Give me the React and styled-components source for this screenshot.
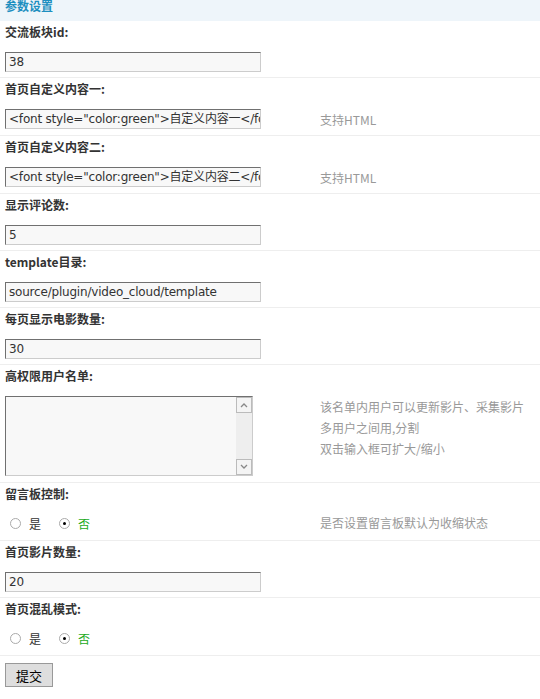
import React from "react";
import styled, { createGlobalStyle } from "styled-components";

const G = createGlobalStyle`
  body { margin:0; background:#fff; font-family: "DejaVu Sans","Noto Sans CJK SC",sans-serif; font-size:12px; color:#333; }
`;
const Page = styled.div`width:540px;`;
const Head = styled.div`
  height:21px; background:#eef5fa; color:#1e8fc0; font-weight:bold; font-size:12px;
  line-height:12px; padding-left:5px; font-family:"Noto Sans CJK SC",sans-serif; overflow:hidden;
`;
const Section = styled.div`border-bottom:1px solid #eeeeee;`;
const Label = styled.div`
  padding-left:5px; line-height:22px; height:22px; font-weight:bold; font-size:12px; color:#333;
  font-family:"Noto Sans CJK SC",sans-serif;
`;
const Field = styled.div`
  display:grid; grid-template-columns:315px 1fr; align-items:start;
  padding:${p => p.$radio ? "8px 0 7px 5px" : "9px 0 5px 5px"};
  ${p => p.$tall && "padding-bottom:6px;"}
`;
const Input = styled.div`
  box-sizing:border-box; width:256px; height:20px; background:#f8f8f8;
  border:1px solid #ccc; border-top-color:#707070; border-left-color:#707070;
  font-size:12px; line-height:18px; padding-left:3px; white-space:nowrap; overflow:hidden; color:#333;
  font-family:"DejaVu Sans","Noto Sans CJK SC",sans-serif; letter-spacing:-0.2px;
`;
const Area = styled.div`
  box-sizing:border-box; width:248px; height:80px; background:#f8f8f8;
  border:1px solid #ccc; border-top-color:#707070; border-left-color:#707070;
  display:flex; justify-content:flex-end;
`;
const Scroll = styled.div`
  width:16px; background:#eeeeee; display:flex; flex-direction:column; justify-content:space-between;
`;
const Arrow = styled.div`
  height:16px; box-sizing:border-box; border:1px solid #bbb; background:#f4f4f4;
  display:flex; align-items:center; justify-content:center;
`;
const Hint = styled.div`
  color:#999; font-size:12px; line-height:21px; font-family:"Noto Sans CJK SC",sans-serif;
`;
const Radios = styled.div`display:flex; align-items:center; height:20px; padding-left:5px;`;
const Radio = styled.span`
  width:11px; height:11px; border-radius:50%; border:1px solid #aaa; box-sizing:border-box;
  background:#fff; display:inline-flex; align-items:center; justify-content:center; margin-right:8px;
  &::after { content:""; width:3px; height:3px; border-radius:50%; background:${p => p.$on ? "#000" : "transparent"}; }
`;
const Opt = styled.span`
  font-family:"Noto Sans CJK SC",sans-serif; font-size:12px; color:${p => p.$green ? "#22aa22" : "#333"};
  margin-right:18px;
`;
const Btn = styled.button`
  margin:7px 0 0 5px; width:48px; height:24px; background:#dedede; border:1px solid #999;
  font-family:"Noto Sans CJK SC",sans-serif; font-size:13px; color:#000; padding:0;
`;

const Chev = ({ up }) => (
  <svg width="8" height="6" viewBox="0 0 8 6"><path d={up ? "M1 5L4 2L7 5" : "M1 1L4 4L7 1"} stroke="#888" strokeWidth="1.3" fill="none" /></svg>
);

const TextRow = ({ label, value, hint }) => (
  <Section>
    <Label>{label}</Label>
    <Field><Input>{value}</Input>{hint && <Hint>{hint}</Hint>}</Field>
  </Section>
);
const RadioRow = ({ label, hint }) => (
  <Section>
    <Label>{label}</Label>
    <Field $radio>
      <Radios><Radio /><Opt>是</Opt><Radio $on /><Opt $green>否</Opt></Radios>
      {hint && <Hint style={{ marginTop: -1 }}>{hint}</Hint>}
    </Field>
  </Section>
);

export default function App() {
  return (
    <Page>
      <G />
      <Head>参数设置</Head>
      <TextRow label="交流板块id:" value="38" />
      <TextRow label="首页自定义内容一:" value={'<font style="color:green">自定义内容一</font>'} hint="支持HTML" />
      <TextRow label="首页自定义内容二:" value={'<font style="color:green">自定义内容二</font>'} hint="支持HTML" />
      <TextRow label="显示评论数:" value="5" />
      <TextRow label="template目录:" value="source/plugin/video_cloud/template" />
      <TextRow label="每页显示电影数量:" value="30" />
      <Section>
        <Label>高权限用户名单:</Label>
        <Field $tall>
          <Area><Scroll><Arrow><Chev up /></Arrow><Arrow><Chev /></Arrow></Scroll></Area>
          <div>
            <Hint>该名单内用户可以更新影片、采集影片</Hint>
            <Hint>多用户之间用,分割</Hint>
            <Hint>双击输入框可扩大/缩小</Hint>
          </div>
        </Field>
      </Section>
      <RadioRow label="留言板控制:" hint="是否设置留言板默认为收缩状态" />
      <TextRow label="首页影片数量:" value="20" />
      <RadioRow label="首页混乱模式:" />
      <Btn>提交</Btn>
    </Page>
  );
}
